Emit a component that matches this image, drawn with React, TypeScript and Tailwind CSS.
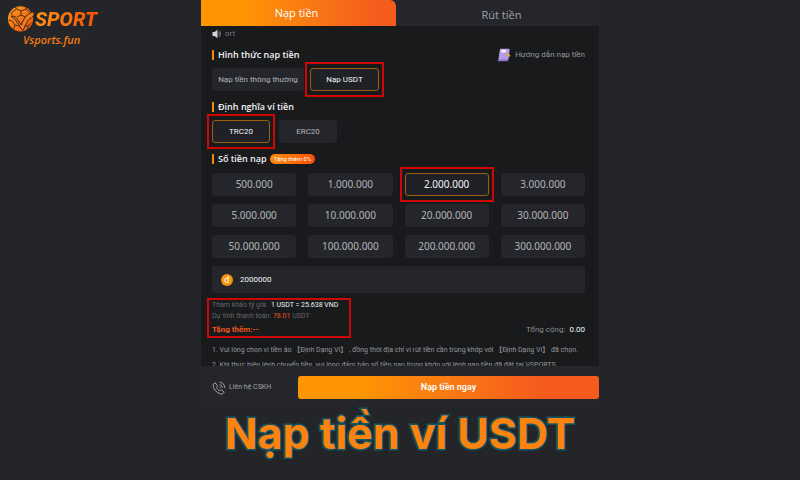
import React, { useState } from 'react';
import clsx from 'clsx';

const amounts = [
  '500.000', '1.000.000', '2.000.000', '3.000.000',
  '5.000.000', '10.000.000', '20.000.000', '30.000.000',
  '50.000.000', '100.000.000', '200.000.000', '300.000.000',
];

const notes = [
  '1. Vui lòng chọn ví tiền ảo 【Định Dạng Ví】 , đồng thời địa chỉ ví rút tiền cần trùng khớp với 【Định Dạng Ví】 đã chọn.',
  '2. Khi thực hiện lệnh chuyển tiền, vui lòng đảm bảo số tiền nạp trùng khớp với lệnh nạp tiền đã đặt tại VSPORTS.',
];

// Red frame that points the reader at a step of the guide
const Highlight = ({ className }: { className: string }) => (
  <span className={clsx('pointer-events-none absolute border-2 border-[#cf0606]', className)} />
);

const SectionTitle = ({ children }: { children: React.ReactNode }) => (
  <h2 className="flex items-center gap-1 font-['Open_Sans',sans-serif] text-[9px] leading-3 font-semibold text-gray-100">
    <span className="h-[10px] w-[2px] bg-[#ff8a00]" />
    {children}
  </h2>
);

type OptionProps = {
  label: string;
  active: boolean;
  onClick: () => void;
  className?: string;
};

const Option = ({ label, active, onClick, className }: OptionProps) => (
  <div className={clsx('relative', className)}>
    <button
      type="button"
      onClick={onClick}
      aria-pressed={active}
      className={clsx(
        'h-[23px] w-full rounded-[3px] border whitespace-nowrap',
        active ? 'border-[#9a6010] bg-[#202126] text-gray-100' : 'border-[#25262b] bg-[#25262b] text-[#b4b5b9]'
      )}
    >
      {label}
    </button>
    {active && <Highlight className="-inset-x-[5px] -inset-y-[6px]" />}
  </div>
);

const Logo = () => (
  <a href="#" className="block w-[96px] pt-[5px] pl-[7px]">
    <span className="flex items-center">
      <svg viewBox="0 0 28 28" className="h-[28px] w-[28px] shrink-0">
        <defs>
          <linearGradient id="ball" x1="0" y1="0" x2="1" y2="1">
            <stop offset="0" stopColor="#ff9d1c" />
            <stop offset="1" stopColor="#f4500c" />
          </linearGradient>
        </defs>
        <circle cx="13.5" cy="13.8" r="12.6" fill="url(#ball)" />
        <g fill="none" stroke="#3a2a20" strokeWidth="0.9">
          <path d="M9.5 4 L14 6 L19 4 M14 6 V10 M9.5 4 L8.5 1.8 M19 4 L19.5 2 M14 10 L10 12 M14 10 L18.5 12 M9.5 4 L5 7 L4.5 10 M19 4 L23 7" />
          <path d="M1.5 15 L5 16 L8 20 L6.5 24 M8 20 L12.5 21 M18 21 L21 21 L24.5 18 M21 21 L20.5 24.5" />
        </g>
        <path d="M4 11.5 C8 9.5 10.5 14 14.2 20 C17 13 20 8.5 26 6.8 C28.2 8.5 26.6 12.2 23.4 13.4 C20.2 15.4 18.5 20.5 15.8 25.6 C12 21.5 9.2 13.2 4 11.5 Z" fill="#f97a14" stroke="#2b2523" strokeWidth="1" />
      </svg>
      <span className="bg-linear-to-r from-[#ff9412] to-[#f94e08] bg-clip-text pr-[2px] font-['Roboto',sans-serif] text-[20px] leading-7 font-extrabold text-transparent italic">
        SPORT
      </span>
    </span>
    <span className="block pl-4 font-['Open_Sans',sans-serif] text-[11px] leading-[13px] font-semibold text-[#f47a10] italic">
      Vsports.fun
    </span>
  </a>
);

const SpeakerIcon = () => (
  <svg viewBox="0 0 10 10" className="h-[10px] w-[10px]">
    <path d="M0.5 3 H2.5 L5.5 0.8 V9.2 L2.5 7 H0.5 Z" fill="#d2d3d6" />
    <path d="M6.7 3 Q7.9 5 6.7 7 M7.6 1.6 Q9.6 5 7.6 8.4" fill="none" stroke="#77787c" strokeWidth="0.9" />
  </svg>
);

const GuideIcon = () => (
  <svg viewBox="0 0 14 14" className="h-[14px] w-[14px]">
    <path d="M3 0.8 H11.6 Q12.8 0.8 12.6 2 L11.6 11.4 H1.4 Z" fill="#b79be6" />
    <path d="M1.4 11.2 Q0.2 11.5 0.8 13.2 H10.6 Q11.6 13 11.7 11.2 L12.2 6 L10.8 11.4 Z" fill="#7d5fbe" />
    <path d="M1.8 11.5 H10.2 L10 12.2 H1.6 Z" fill="#cdb8f2" />
    <path d="M4.3 1.8 H9.3 L8.9 4.4 H3.8 Z" fill="#f3edff" />
    <path d="M8.4 5.6 L10.4 5.2 L13.4 7.2 L12.8 9 L10.4 7.4 Z" fill="#e2ad2b" />
  </svg>
);

const SupportIcon = () => (
  <svg viewBox="0 0 14 14" className="h-[14px] w-[14px]" fill="none" stroke="#b4b5b9" strokeWidth="0.9" strokeLinecap="round" strokeLinejoin="round">
    <path d="M3.4 2.2 L5.4 4.4 Q5.8 5 5 5.7 Q4.4 6.3 5 7.2 Q6 8.8 7.2 9.5 Q7.9 9.8 8.4 9.2 Q9 8.6 9.6 9 L11.8 10.8 Q12.3 11.4 11.6 12 Q10.4 13.5 8.6 13 Q5.5 12.2 3 9.2 Q1 6.6 1.1 4.4 Q1.3 2.9 2.5 2.1 Q3 1.8 3.4 2.2 Z" />
    <path d="M8 3.6 Q10.2 4 10.4 6.5 M8 1.2 Q12.3 1.7 12.8 6.5 M7.8 5.9 L8.2 6.3" />
  </svg>
);

const App = () => {
  const [method, setMethod] = useState('Nạp USDT');
  const [network, setNetwork] = useState('TRC20');
  const [amount, setAmount] = useState('2.000.000');
  const [value, setValue] = useState('2000000');

  const pickAmount = (next: string) => {
    setAmount(next);
    setValue(next.replace(/\./g, ''));
  };

  return (
    <div className="min-h-screen bg-[#242528] font-['Roboto','Noto_Sans_CJK_SC',sans-serif]">
      <div className="grid grid-cols-4">
        <header>
          <Logo />
        </header>

        <main className="col-span-2 mx-px bg-[#191a1c]">
          <nav className="flex h-[26px] bg-[#25262b] font-['Open_Sans',sans-serif] text-[11px]">
            <button type="button" className="w-[49%] rounded-tr-md bg-linear-to-r from-[#ff9500] from-20% to-[#f45b1c] to-90% pr-1 text-white">
              Nạp tiền
            </button>
            <button type="button" className="flex-1 pt-1 pl-2 text-[#a2a3a7]">
              Rút tiền
            </button>
          </nav>

          <div className="h-[340px] overflow-hidden pt-[2px] pr-[14px] pl-[11px]">
            <p className="flex items-center gap-[3px] text-[8px] leading-3 text-[#77787c]">
              <SpeakerIcon />
              ort
            </p>

            <div className="mt-2 flex items-center justify-between">
              <SectionTitle>Hình thức nạp tiền</SectionTitle>
              <a href="#" className="flex items-center gap-1 text-[8px] leading-3 text-[#96979b]">
                <GuideIcon />
                Hướng dẫn nạp tiền
              </a>
            </div>
            <div className="mt-[6px] flex gap-[6px] text-[8px]">
              <Option className="w-[92px]" label="Nạp tiền thông thường" active={method === 'Nạp tiền thông thường'} onClick={() => setMethod('Nạp tiền thông thường')} />
              <Option className="w-[69px]" label="Nạp USDT" active={method === 'Nạp USDT'} onClick={() => setMethod('Nạp USDT')} />
            </div>

            <div className="mt-[10px]">
              <SectionTitle>Định nghĩa ví tiền</SectionTitle>
            </div>
            <div className="mt-[7px] flex gap-[9px] text-[8px]">
              {['TRC20', 'ERC20'].map((item) => (
                <Option key={item} className="w-[58px]" label={item} active={network === item} onClick={() => setNetwork(item)} />
              ))}
            </div>

            <div className="mt-[10px] flex items-center gap-[3px]">
              <SectionTitle>Số tiền nạp</SectionTitle>
              <span className="rounded-full bg-linear-to-r from-[#ff8a0a] to-[#ff4d08] px-1 text-[6px] leading-[10px] text-white">Tặng thêm 0%</span>
            </div>
            <div className="mt-[8px] grid grid-cols-4 gap-x-3 gap-y-2 font-['Noto_Sans',sans-serif] text-[10px]">
              {amounts.map((item) => (
                <Option key={item} label={item} active={amount === item} onClick={() => pickAmount(item)} />
              ))}
            </div>

            <label className="mt-2 flex h-[27px] items-center gap-[7px] rounded-[3px] bg-[#25262b] pl-[9px]">
              <span className="h-3 w-3 rounded-full bg-[#ff9207] text-center text-[9px] leading-3 text-white">đ</span>
              <input
                aria-label="Số tiền nạp"
                value={value}
                onChange={(e) => setValue(e.target.value)}
                className="min-w-0 flex-1 bg-transparent text-[8px] text-gray-100 outline-none"
              />
            </label>

            <div className="mt-[7px] flex items-end justify-between">
              <div className="relative w-[134px] text-[7px] leading-[11px] whitespace-nowrap text-[#65666a]">
                <p>
                  Tham khảo tỷ giá: <span className="ml-[2px] text-gray-100">1 USDT = 25.638 VND</span>
                </p>
                <p>
                  Dự tính thanh toán: <span className="text-[#e8501c]">78.01</span> USDT
                </p>
                <p className="mt-[2px] text-[8px] leading-3 font-bold text-[#f0561c]">Tặng thêm:--</p>
                <Highlight className="-inset-x-[5px] -inset-y-[2px]" />
              </div>
              <p className="text-[8px] leading-3 text-[#8c8d91]">
                Tổng cộng: <span className="ml-[2px] text-gray-100">0.00</span>
              </p>
            </div>

            <div className="mt-[7px] text-[7px] leading-[15px] whitespace-nowrap text-[#96979b]">
              {notes.map((note) => (
                <p key={note}>{note}</p>
              ))}
            </div>
          </div>

          <footer className="flex h-[41px] items-center bg-[#25262b] pt-[2px] pl-[11px]">
            <a href="#" className="flex w-[86px] items-center gap-[3px] text-[7px] text-[#a2a3a7]">
              <SupportIcon />
              Liên hệ CSKH
            </a>
            <button type="button" className="h-[23px] flex-1 rounded-[3px] bg-linear-to-r from-[#ff9500] from-20% to-[#f45b1c] to-80% text-[9px] font-semibold text-white">
              Nạp tiền ngay
            </button>
          </footer>
        </main>
      </div>

      <h1 className="text-center font-['Inter',sans-serif] text-[43px] leading-[52px] font-bold text-[#ff830c] [-webkit-text-stroke:3px_#125566] [paint-order:stroke_fill]">
        Nạp tiền ví USDT
      </h1>
    </div>
  );
};

export default App;
